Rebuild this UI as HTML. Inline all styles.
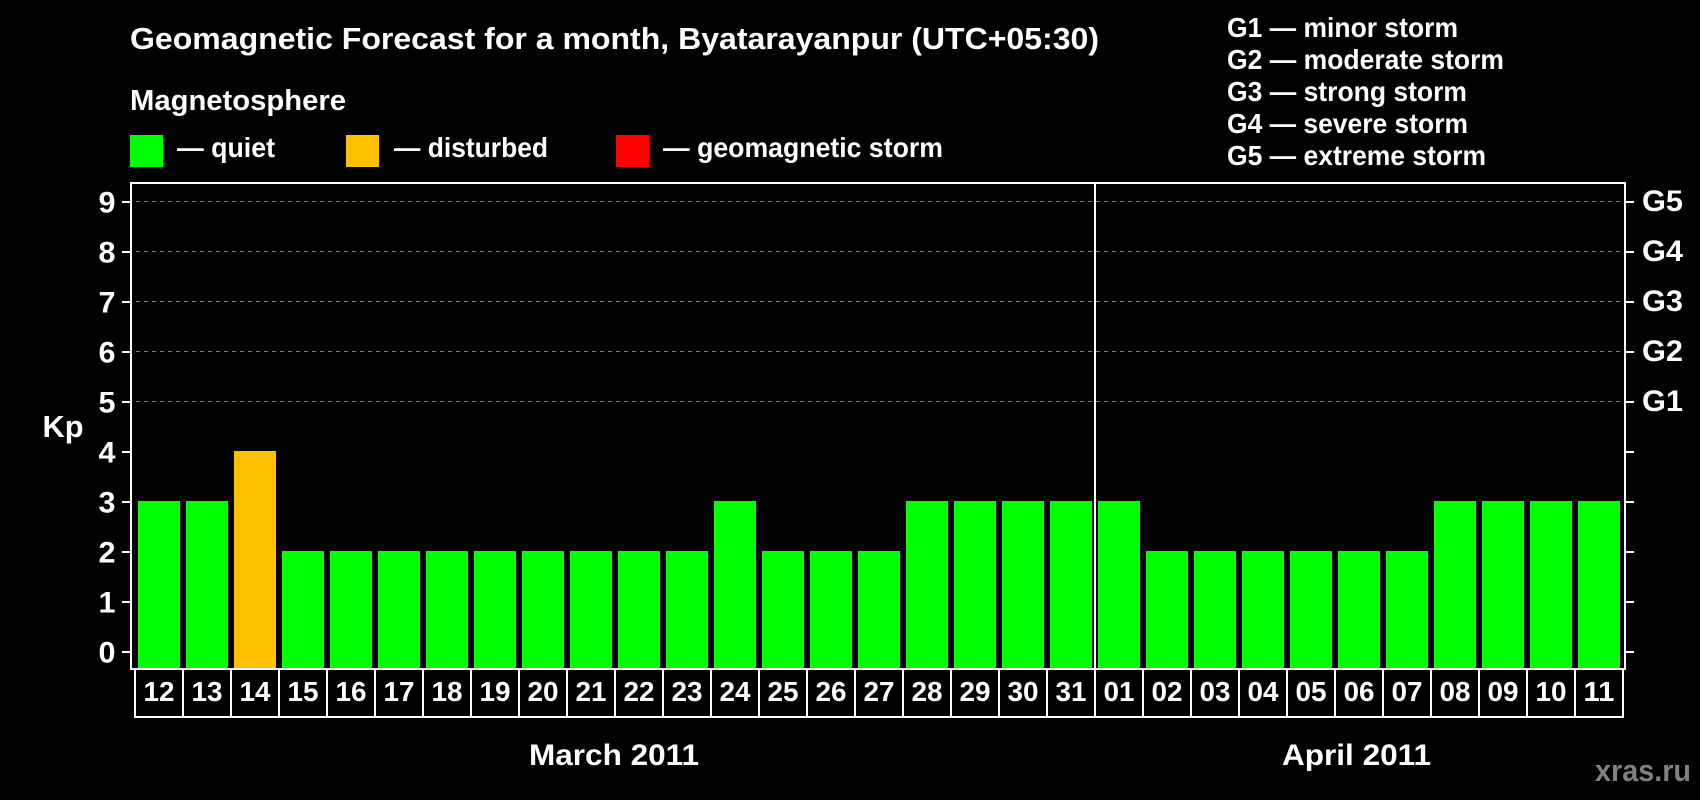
<!DOCTYPE html>
<html><head><meta charset="utf-8"><title>Geomagnetic Forecast</title>
<style>html,body{margin:0;padding:0;background:#000;width:1700px;height:800px;overflow:hidden}svg{display:block}text{font-family:"Liberation Sans",Arial,sans-serif;font-weight:700;fill:#fff}</style></head>
<body>
<svg xmlns="http://www.w3.org/2000/svg" width="1700" height="800" viewBox="0 0 1700 800">
<rect width="1700" height="800" fill="#000"/>
<text x="130" y="49" font-size="31" textLength="969" lengthAdjust="spacingAndGlyphs">Geomagnetic Forecast for a month, Byatarayanpur (UTC+05:30)</text>
<text x="130" y="110" font-size="29" textLength="216" lengthAdjust="spacingAndGlyphs">Magnetosphere</text>
<g shape-rendering="crispEdges">
<rect x="130" y="135" width="33" height="32" fill="#0f0"/>
<rect x="346" y="135" width="33" height="32" fill="#ffc000"/>
<rect x="616" y="135" width="33" height="32" fill="#f00"/>
</g>
<g font-size="28">
<text x="177" y="157" textLength="98" lengthAdjust="spacingAndGlyphs">— quiet</text>
<text x="394" y="157" textLength="154" lengthAdjust="spacingAndGlyphs">— disturbed</text>
<text x="663" y="157" textLength="280" lengthAdjust="spacingAndGlyphs">— geomagnetic storm</text>
<text x="1227" y="37" textLength="231" lengthAdjust="spacingAndGlyphs">G1 — minor storm</text>
<text x="1227" y="69" textLength="277" lengthAdjust="spacingAndGlyphs">G2 — moderate storm</text>
<text x="1227" y="101" textLength="240" lengthAdjust="spacingAndGlyphs">G3 — strong storm</text>
<text x="1227" y="133" textLength="241" lengthAdjust="spacingAndGlyphs">G4 — severe storm</text>
<text x="1227" y="165" textLength="259" lengthAdjust="spacingAndGlyphs">G5 — extreme storm</text>
</g>
<g shape-rendering="crispEdges">
<g stroke="#808080" stroke-width="1" stroke-dasharray="4 4">
<path d="M136 201.5H1624M136 251.5H1624M136 301.5H1624M136 351.5H1624M136 401.5H1624"/>
</g>
<g fill="#0f0">
<rect x="138" y="501" width="42" height="167"/><rect x="186" y="501" width="42" height="167"/>
<rect x="234" y="451" width="42" height="217" fill="#ffc000"/>
<rect x="282" y="551" width="42" height="117"/><rect x="330" y="551" width="42" height="117"/><rect x="378" y="551" width="42" height="117"/><rect x="426" y="551" width="42" height="117"/><rect x="474" y="551" width="42" height="117"/><rect x="522" y="551" width="42" height="117"/><rect x="570" y="551" width="42" height="117"/><rect x="618" y="551" width="42" height="117"/><rect x="666" y="551" width="42" height="117"/>
<rect x="714" y="501" width="42" height="167"/>
<rect x="762" y="551" width="42" height="117"/><rect x="810" y="551" width="42" height="117"/><rect x="858" y="551" width="42" height="117"/>
<rect x="906" y="501" width="42" height="167"/><rect x="954" y="501" width="42" height="167"/><rect x="1002" y="501" width="42" height="167"/><rect x="1050" y="501" width="42" height="167"/><rect x="1098" y="501" width="42" height="167"/>
<rect x="1146" y="551" width="42" height="117"/><rect x="1194" y="551" width="42" height="117"/><rect x="1242" y="551" width="42" height="117"/><rect x="1290" y="551" width="42" height="117"/><rect x="1338" y="551" width="42" height="117"/><rect x="1386" y="551" width="42" height="117"/>
<rect x="1434" y="501" width="42" height="167"/><rect x="1482" y="501" width="42" height="167"/><rect x="1530" y="501" width="42" height="167"/><rect x="1578" y="501" width="42" height="167"/>
</g>
<g fill="#fff">
<rect x="130" y="182" width="1496" height="2"/>
<rect x="130" y="182" width="2" height="488"/>
<rect x="1624" y="182" width="2" height="488"/>
<rect x="130" y="668" width="1496" height="2"/>
<rect x="1094" y="184" width="2" height="534"/>
<rect x="134" y="668" width="2" height="50"/>
<rect x="134" y="716" width="1490" height="2"/>
<rect x="182" y="668" width="2" height="48"/><rect x="230" y="668" width="2" height="48"/><rect x="278" y="668" width="2" height="48"/><rect x="326" y="668" width="2" height="48"/><rect x="374" y="668" width="2" height="48"/><rect x="422" y="668" width="2" height="48"/><rect x="470" y="668" width="2" height="48"/><rect x="518" y="668" width="2" height="48"/><rect x="566" y="668" width="2" height="48"/><rect x="614" y="668" width="2" height="48"/><rect x="662" y="668" width="2" height="48"/><rect x="710" y="668" width="2" height="48"/><rect x="758" y="668" width="2" height="48"/><rect x="806" y="668" width="2" height="48"/><rect x="854" y="668" width="2" height="48"/><rect x="902" y="668" width="2" height="48"/><rect x="950" y="668" width="2" height="48"/><rect x="998" y="668" width="2" height="48"/><rect x="1046" y="668" width="2" height="48"/><rect x="1142" y="668" width="2" height="48"/><rect x="1190" y="668" width="2" height="48"/><rect x="1238" y="668" width="2" height="48"/><rect x="1286" y="668" width="2" height="48"/><rect x="1334" y="668" width="2" height="48"/><rect x="1382" y="668" width="2" height="48"/><rect x="1430" y="668" width="2" height="48"/><rect x="1478" y="668" width="2" height="48"/><rect x="1526" y="668" width="2" height="48"/><rect x="1574" y="668" width="2" height="48"/><rect x="1622" y="668" width="2" height="50"/>
<rect x="122" y="201" width="8" height="2"/><rect x="122" y="251" width="8" height="2"/><rect x="122" y="301" width="8" height="2"/><rect x="122" y="351" width="8" height="2"/><rect x="122" y="401" width="8" height="2"/><rect x="122" y="451" width="8" height="2"/><rect x="122" y="501" width="8" height="2"/><rect x="122" y="551" width="8" height="2"/><rect x="122" y="601" width="8" height="2"/><rect x="122" y="651" width="8" height="2"/>
<rect x="1626" y="201" width="8" height="2"/><rect x="1626" y="251" width="8" height="2"/><rect x="1626" y="301" width="8" height="2"/><rect x="1626" y="351" width="8" height="2"/><rect x="1626" y="401" width="8" height="2"/><rect x="1626" y="451" width="8" height="2"/><rect x="1626" y="501" width="8" height="2"/><rect x="1626" y="551" width="8" height="2"/><rect x="1626" y="601" width="8" height="2"/><rect x="1626" y="651" width="8" height="2"/>
</g>
</g>
<g font-size="30">
<text x="98.5" y="212.5" textLength="17" lengthAdjust="spacingAndGlyphs">9</text><text x="98.5" y="262.5" textLength="17" lengthAdjust="spacingAndGlyphs">8</text><text x="98.5" y="312.5" textLength="17" lengthAdjust="spacingAndGlyphs">7</text><text x="98.5" y="362.5" textLength="17" lengthAdjust="spacingAndGlyphs">6</text><text x="98.5" y="412.5" textLength="17" lengthAdjust="spacingAndGlyphs">5</text><text x="98.5" y="462.5" textLength="17" lengthAdjust="spacingAndGlyphs">4</text><text x="98.5" y="512.5" textLength="17" lengthAdjust="spacingAndGlyphs">3</text><text x="98.5" y="562.5" textLength="17" lengthAdjust="spacingAndGlyphs">2</text><text x="98.5" y="612.5" textLength="17" lengthAdjust="spacingAndGlyphs">1</text><text x="98.5" y="662.5" textLength="17" lengthAdjust="spacingAndGlyphs">0</text>
<text x="1642" y="211" textLength="41" lengthAdjust="spacingAndGlyphs">G5</text><text x="1642" y="261" textLength="41" lengthAdjust="spacingAndGlyphs">G4</text><text x="1642" y="311" textLength="41" lengthAdjust="spacingAndGlyphs">G3</text><text x="1642" y="361" textLength="41" lengthAdjust="spacingAndGlyphs">G2</text><text x="1642" y="411" textLength="41" lengthAdjust="spacingAndGlyphs">G1</text>
</g>
<text x="42.5" y="437" font-size="31" textLength="41" lengthAdjust="spacingAndGlyphs">Kp</text>
<g font-size="28">
<text x="143.5" y="701" textLength="31" lengthAdjust="spacingAndGlyphs">12</text><text x="191.5" y="701" textLength="31" lengthAdjust="spacingAndGlyphs">13</text><text x="239.5" y="701" textLength="31" lengthAdjust="spacingAndGlyphs">14</text><text x="287.5" y="701" textLength="31" lengthAdjust="spacingAndGlyphs">15</text><text x="335.5" y="701" textLength="31" lengthAdjust="spacingAndGlyphs">16</text><text x="383.5" y="701" textLength="31" lengthAdjust="spacingAndGlyphs">17</text><text x="431.5" y="701" textLength="31" lengthAdjust="spacingAndGlyphs">18</text><text x="479.5" y="701" textLength="31" lengthAdjust="spacingAndGlyphs">19</text><text x="527.5" y="701" textLength="31" lengthAdjust="spacingAndGlyphs">20</text><text x="575.5" y="701" textLength="31" lengthAdjust="spacingAndGlyphs">21</text><text x="623.5" y="701" textLength="31" lengthAdjust="spacingAndGlyphs">22</text><text x="671.5" y="701" textLength="31" lengthAdjust="spacingAndGlyphs">23</text><text x="719.5" y="701" textLength="31" lengthAdjust="spacingAndGlyphs">24</text><text x="767.5" y="701" textLength="31" lengthAdjust="spacingAndGlyphs">25</text><text x="815.5" y="701" textLength="31" lengthAdjust="spacingAndGlyphs">26</text><text x="863.5" y="701" textLength="31" lengthAdjust="spacingAndGlyphs">27</text><text x="911.5" y="701" textLength="31" lengthAdjust="spacingAndGlyphs">28</text><text x="959.5" y="701" textLength="31" lengthAdjust="spacingAndGlyphs">29</text><text x="1007.5" y="701" textLength="31" lengthAdjust="spacingAndGlyphs">30</text><text x="1055.5" y="701" textLength="31" lengthAdjust="spacingAndGlyphs">31</text><text x="1103.5" y="701" textLength="31" lengthAdjust="spacingAndGlyphs">01</text><text x="1151.5" y="701" textLength="31" lengthAdjust="spacingAndGlyphs">02</text><text x="1199.5" y="701" textLength="31" lengthAdjust="spacingAndGlyphs">03</text><text x="1247.5" y="701" textLength="31" lengthAdjust="spacingAndGlyphs">04</text><text x="1295.5" y="701" textLength="31" lengthAdjust="spacingAndGlyphs">05</text><text x="1343.5" y="701" textLength="31" lengthAdjust="spacingAndGlyphs">06</text><text x="1391.5" y="701" textLength="31" lengthAdjust="spacingAndGlyphs">07</text><text x="1439.5" y="701" textLength="31" lengthAdjust="spacingAndGlyphs">08</text><text x="1487.5" y="701" textLength="31" lengthAdjust="spacingAndGlyphs">09</text><text x="1535.5" y="701" textLength="31" lengthAdjust="spacingAndGlyphs">10</text><text x="1583.5" y="701" textLength="31" lengthAdjust="spacingAndGlyphs">11</text>
</g>
<text x="529" y="765" font-size="30" textLength="170" lengthAdjust="spacingAndGlyphs">March 2011</text>
<text x="1282" y="765" font-size="30" textLength="149" lengthAdjust="spacingAndGlyphs">April 2011</text>
<text x="1595" y="781" font-size="31" textLength="96" lengthAdjust="spacingAndGlyphs" style="fill:#808080">xras.ru</text>
</svg>
</body></html>
